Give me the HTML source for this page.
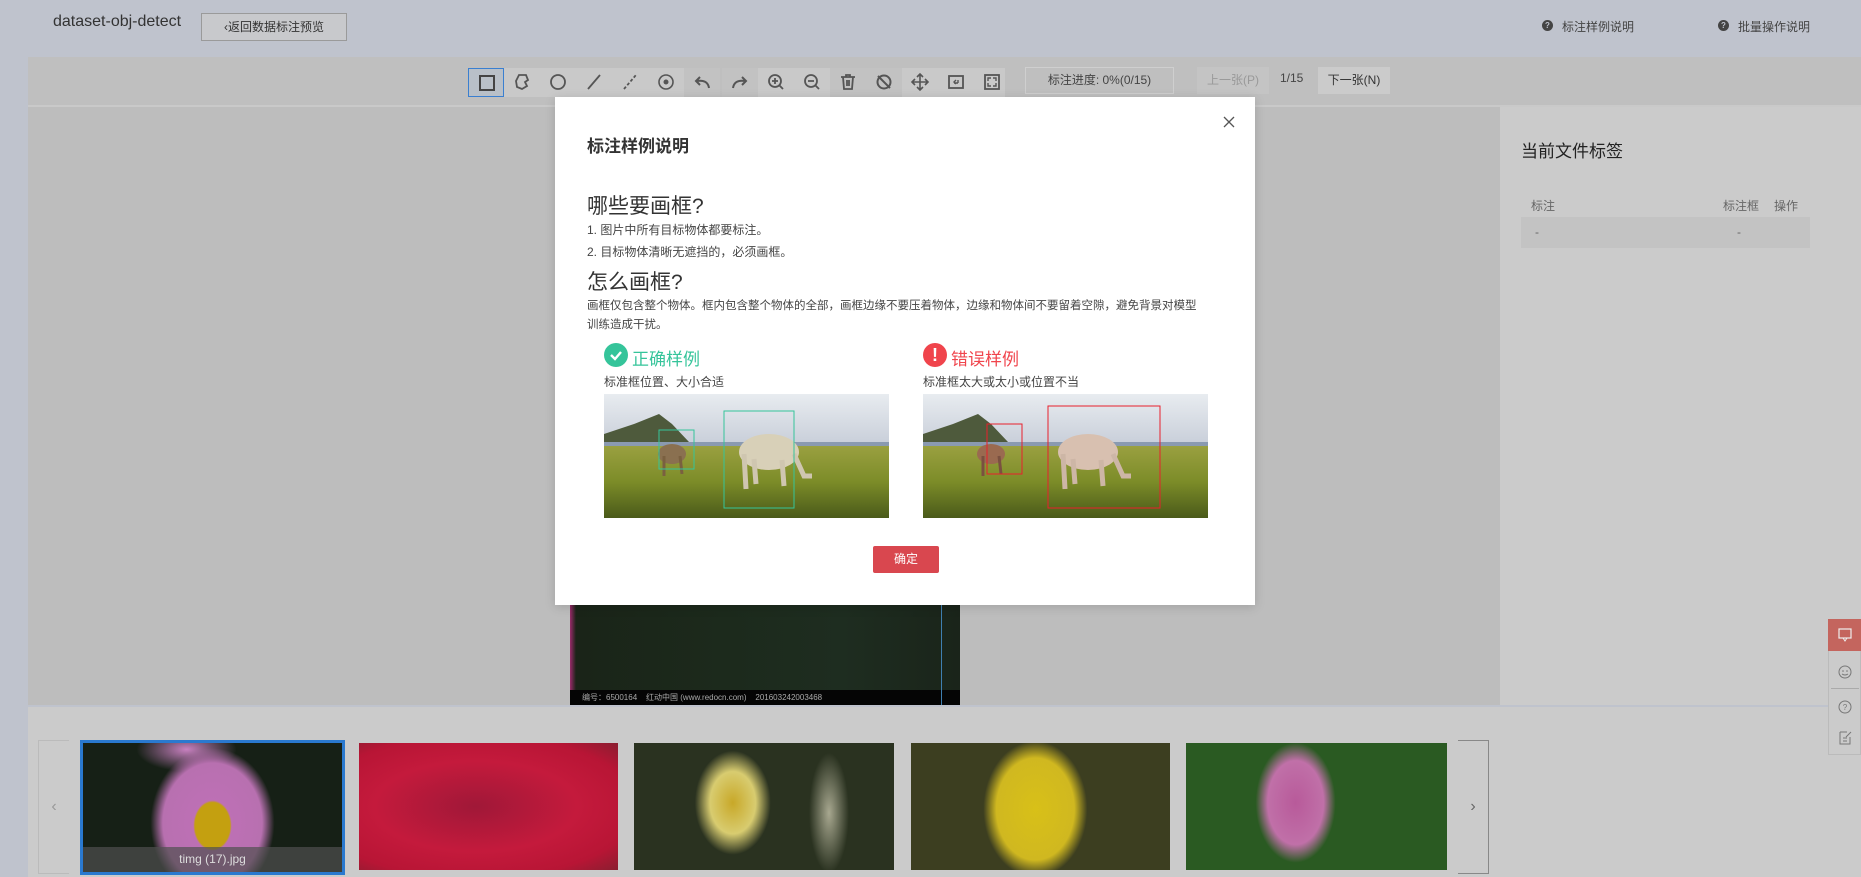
<!DOCTYPE html>
<html><head><meta charset="utf-8">
<style>
*{margin:0;padding:0;box-sizing:border-box}
body{width:1861px;height:877px;overflow:hidden;background:#bfc3cd;font-family:"Liberation Sans","Noto Sans CJK SC",sans-serif;position:relative;color:#333}
.a{position:absolute}
.tb{position:absolute;top:68px;width:36px;height:29px;background:#c9c9c9}
.tb svg{position:absolute;left:8px;top:4px}
</style></head><body>
<div class="a" style="left:53px;top:13px;font-size:16px;color:#333">dataset-obj-detect</div>
<div class="a" style="left:201px;top:13px;width:146px;height:28px;border:1px solid #9a9a9a;background:#c8c9cc;font-size:12px;line-height:26px;text-align:center;color:#333">&lsaquo;返回数据标注预览</div>
<div class="a" style="left:1542px;top:20px;width:11px;height:11px;border-radius:50%;background:#444;color:#bfc3cd;font-size:8px;font-weight:bold;line-height:11px;text-align:center">?</div>
<div class="a" style="left:1562px;top:18px;font-size:12px;color:#444">标注样例说明</div>
<div class="a" style="left:1718px;top:20px;width:11px;height:11px;border-radius:50%;background:#444;color:#bfc3cd;font-size:8px;font-weight:bold;line-height:11px;text-align:center">?</div>
<div class="a" style="left:1738px;top:18px;font-size:12px;color:#444">批量操作说明</div>

<div class="a" style="left:28px;top:57px;width:1833px;height:48px;background:#bfbfbf"></div>
<div class="a" style="left:28px;top:105px;width:1833px;height:2px;background:#c9c9c9"></div>
<div class="tb" style="left:468px;background:#b9c0c8;border:1px solid #3a7fd0"><svg width="20" height="20" viewBox="0 0 20 20"><rect x="3" y="3" width="14" height="14" fill="none" stroke="#444" stroke-width="2"/></svg></div>
<div class="tb" style="left:504px"><svg width="20" height="20" viewBox="0 0 20 20"><path d="M7 3 L14 3 L16 8 L13 10 L15 14 L10 17 L5 15 L4 9 Z" fill="none" stroke="#555" stroke-width="1.8"/></svg></div>
<div class="tb" style="left:540px"><svg width="20" height="20"><circle cx="10" cy="10" r="7" fill="none" stroke="#555" stroke-width="1.8"/></svg></div>
<div class="tb" style="left:576px"><svg width="20" height="20"><line x1="4" y1="17" x2="16" y2="3" stroke="#555" stroke-width="1.8"/></svg></div>
<div class="tb" style="left:612px"><svg width="20" height="20"><line x1="4" y1="17" x2="16" y2="3" stroke="#555" stroke-width="1.8" stroke-dasharray="3 2"/></svg></div>
<div class="tb" style="left:648px"><svg width="20" height="20"><circle cx="10" cy="10" r="7" fill="none" stroke="#555" stroke-width="1.6"/><circle cx="10" cy="10" r="2.5" fill="#555"/></svg></div>
<div class="tb" style="left:684px;background:#c2c2c2"><svg width="20" height="20"><path d="M17 16 C16 10 12 8 5 9 M8 5 L4 9 L8 13" fill="none" stroke="#555" stroke-width="2"/></svg></div>
<div class="tb" style="left:722px;background:#c2c2c2"><svg width="20" height="20"><path d="M3 16 C4 10 8 8 15 9 M12 5 L16 9 L12 13" fill="none" stroke="#555" stroke-width="2"/></svg></div>
<div class="tb" style="left:758px"><svg width="20" height="20"><circle cx="9" cy="9" r="6" fill="none" stroke="#555" stroke-width="1.8"/><path d="M13 13 L17 17 M6 9 H12 M9 6 V12" stroke="#555" stroke-width="1.8"/></svg></div>
<div class="tb" style="left:794px"><svg width="20" height="20"><circle cx="9" cy="9" r="6" fill="none" stroke="#555" stroke-width="1.8"/><path d="M13 13 L17 17 M6 9 H12" stroke="#555" stroke-width="1.8"/></svg></div>
<div class="tb" style="left:830px;background:#c2c2c2"><svg width="20" height="20"><path d="M3 5 H17 M8 5 V3 H12 V5 M5 5 L6 17 H14 L15 5 M9 8 V14 M11 8 V14" fill="none" stroke="#555" stroke-width="1.8"/></svg></div>
<div class="tb" style="left:866px;background:#c2c2c2"><svg width="20" height="20"><circle cx="10" cy="10" r="6.5" fill="none" stroke="#555" stroke-width="2"/><line x1="4" y1="4" x2="16" y2="16" stroke="#555" stroke-width="2"/></svg></div>
<div class="tb" style="left:902px"><svg width="20" height="20"><path d="M10 2 V18 M2 10 H18 M7 5 L10 2 L13 5 M7 15 L10 18 L13 15 M5 7 L2 10 L5 13 M15 7 L18 10 L15 13" fill="none" stroke="#555" stroke-width="1.6"/></svg></div>
<div class="tb" style="left:938px"><svg width="20" height="20"><rect x="3" y="4" width="14" height="12" fill="none" stroke="#555" stroke-width="1.8"/><path d="M12 11 H8 M10 8 L8 10 L10 12 M12 8 V11" fill="none" stroke="#555" stroke-width="1.4"/></svg></div>
<div class="tb" style="left:974px;width:31px"><svg width="20" height="20"><rect x="3" y="3" width="14" height="14" fill="none" stroke="#555" stroke-width="1.8"/><path d="M6 9 V6 H9 M11 6 H14 V9 M14 11 V14 H11 M9 14 H6 V11" fill="none" stroke="#555" stroke-width="1.4"/></svg></div>
<div class="a" style="left:1025px;top:67px;width:149px;height:27px;border:1px solid #cfcfcf;font-size:12px;line-height:25px;text-align:center;color:#444">标注进度: 0%(0/15)</div>
<div class="a" style="left:1197px;top:67px;width:72px;height:27px;background:#c4c4c4;font-size:12px;line-height:27px;text-align:center;color:#999">上一张(P)</div>
<div class="a" style="left:1280px;top:71px;font-size:12px;color:#444">1/15</div>
<div class="a" style="left:1318px;top:67px;width:72px;height:27px;background:#cbcbcb;font-size:12px;line-height:27px;text-align:center;color:#333">下一张(N)</div>

<div class="a" style="left:28px;top:107px;width:1472px;height:598px;background:#bdbdbd"></div>
<div class="a" style="left:1500px;top:107px;width:361px;height:598px;background:#cbcbcb"></div>
<div class="a" style="left:1521px;top:137px;font-size:17px;color:#222">当前文件标签</div>
<div class="a" style="left:1521px;top:194px;width:289px;height:22px;font-size:12px;color:#666"><span class="a" style="left:10px;top:3px">标注</span><span class="a" style="left:202px;top:3px">标注框</span><span class="a" style="left:253px;top:3px">操作</span></div>
<div class="a" style="left:1521px;top:217px;width:289px;height:31px;background:#c3c3c3;font-size:12px;color:#666"><span class="a" style="left:14px;top:8px">-</span><span class="a" style="left:216px;top:8px">-</span></div>
<div class="a" style="left:570px;top:590px;width:390px;height:115px;background:linear-gradient(90deg,#9a2a6a 0,#1a2418 6px,#1c2a1c 40%,#1e2d20 70%,#1a241a)"></div>
<div class="a" style="left:570px;top:690px;width:390px;height:15px;background:#050505;font-size:8px;color:#aaa;line-height:15px;padding-left:12px">编号：6500164 &nbsp;&nbsp; 红动中国 (www.redocn.com) &nbsp;&nbsp; 201603242003468</div>
<div class="a" style="left:941px;top:590px;width:1px;height:115px;background:#3f7fb0"></div>

<div class="a" style="left:28px;top:707px;width:1833px;height:170px;background:#cbcbcb"></div>
<div class="a" style="left:38px;top:740px;width:31px;height:134px;border:1px solid #bbb;border-right:none;font-size:16px;color:#999;line-height:132px;text-align:center">&#8249;</div>
<div class="a" style="left:1458px;top:740px;width:31px;height:134px;border:1px solid #888;border-left:none;font-size:16px;color:#666;line-height:132px;text-align:center">&#8250;</div>
<div class="a" style="left:80px;top:740px;width:265px;height:135px;border:3px solid #2a79cf;background:radial-gradient(ellipse 32px 42px at 50% 64%,#c4a010 0,#c4a010 55%,transparent 60%),radial-gradient(ellipse 62px 75px at 50% 62%,#c070b8 0,#b870b0 80%,transparent 100%),radial-gradient(ellipse 50px 22px at 40% 5%,#c880c0,transparent),#162016;overflow:hidden">
<div class="a" style="left:0;bottom:0;width:100%;height:25px;background:rgba(80,80,80,.7);color:#ddd;font-size:12px;line-height:25px;text-align:center">timg (17).jpg</div></div>
<div class="a" style="left:359px;top:743px;width:259px;height:127px;background:radial-gradient(ellipse at 45% 50%,#a01838,#c41a3c 50%,#b81535 80%,#8a1e30)"></div>
<div class="a" style="left:634px;top:743px;width:260px;height:127px;background:radial-gradient(ellipse 38px 52px at 38% 47%,#c8a828,#d8cc70 60%,transparent 100%),radial-gradient(ellipse 20px 60px at 75% 55%,#a8a890,transparent),#2a3220"></div>
<div class="a" style="left:911px;top:743px;width:259px;height:127px;background:radial-gradient(ellipse 52px 68px at 48% 52%,#d8c018,#d0b820 75%,transparent 100%),#3c3e20"></div>
<div class="a" style="left:1186px;top:743px;width:261px;height:127px;background:radial-gradient(ellipse 40px 60px at 42% 47%,#b85a9a,#c070a8 70%,transparent 100%),#2a5a22"></div>

<div class="a" style="left:1828px;top:619px;width:33px;height:136px;background:#cbcbcb;border:1px solid #bbb"></div>
<div class="a" style="left:1828px;top:619px;width:33px;height:32px;background:#c4655e"><svg width="33" height="32"><rect x="11" y="10" width="12" height="9" fill="none" stroke="#eee" stroke-width="1.2"/><path d="M15 19 L17 22 L19 19" fill="none" stroke="#eee"/></svg></div>
<svg class="a" style="left:1836px;top:663px" width="18" height="18"><circle cx="9" cy="9" r="6" fill="none" stroke="#777"/><circle cx="7" cy="8" r=".8" fill="#777"/><circle cx="11" cy="8" r=".8" fill="#777"/><path d="M6 11 Q9 13 12 11" fill="none" stroke="#777"/></svg>
<div class="a" style="left:1831px;top:688px;width:28px;height:1px;background:#aaa"></div>
<svg class="a" style="left:1836px;top:698px" width="18" height="18"><circle cx="9" cy="9" r="6" fill="none" stroke="#777"/><text x="9" y="12" font-size="8" text-anchor="middle" fill="#777">?</text></svg>
<svg class="a" style="left:1836px;top:729px" width="18" height="18"><path d="M4 3 H11 M4 3 V15 H14 V8 M7 9 H11 M7 12 H11 M10 8 L15 3" fill="none" stroke="#777"/></svg>

<div class="a" style="left:555px;top:97px;width:700px;height:508px;background:#fff;box-shadow:0 2px 10px rgba(0,0,0,.15)">
<div class="a" style="left:32px;top:35px;font-size:17px;font-weight:bold;color:#333">标注样例说明</div>
<svg class="a" style="left:668px;top:19px" width="12" height="12"><path d="M1 1 L11 11 M11 1 L1 11" stroke="#555" stroke-width="1.3"/></svg>
<div class="a" style="left:32px;top:93px;font-size:21px;color:#333">哪些要画框?</div>
<div class="a" style="left:32px;top:124px;font-size:12px;color:#444">1. 图片中所有目标物体都要标注。</div>
<div class="a" style="left:32px;top:146px;font-size:12px;color:#444">2. 目标物体清晰无遮挡的，必须画框。</div>
<div class="a" style="left:32px;top:169px;font-size:21px;color:#333">怎么画框?</div>
<div class="a" style="left:32px;top:200px;width:612px;font-size:11.5px;line-height:19px;color:#444">画框仅包含整个物体。框内包含整个物体的全部，画框边缘不要压着物体，边缘和物体间不要留着空隙，避免背景对模型训练造成干扰。</div>
<div class="a" style="left:49px;top:246px;width:24px;height:24px;border-radius:50%;background:#35c49a"><svg width="24" height="24"><path d="M7 12 L11 16 L17 9" fill="none" stroke="#fff" stroke-width="2.4"/></svg></div>
<div class="a" style="left:77px;top:248px;font-size:17px;color:#35c49a">正确样例</div>
<div class="a" style="left:49px;top:276px;font-size:12px;color:#444">标准框位置、大小合适</div>
<div class="a" style="left:368px;top:246px;width:24px;height:24px;border-radius:50%;background:#f0444c;color:#fff;font-weight:bold;font-size:18px;line-height:24px;text-align:center">!</div>
<div class="a" style="left:396px;top:248px;font-size:17px;color:#f0444c">错误样例</div>
<div class="a" style="left:368px;top:276px;font-size:12px;color:#444">标准框太大或太小或位置不当</div>
<svg class="a" style="left:49px;top:297px" width="285" height="124" viewBox="0 0 285 124">
<defs><linearGradient id="sk" x1="0" y1="0" x2="0" y2="1"><stop offset="0" stop-color="#e8ecf0"/><stop offset="1" stop-color="#9aa3b8"/></linearGradient><linearGradient id="gr" x1="0" y1="0" x2="0" y2="1"><stop offset="0" stop-color="#9aa040"/><stop offset=".5" stop-color="#7c8c28"/><stop offset="1" stop-color="#4a5a1a"/></linearGradient></defs>
<rect width="285" height="124" fill="url(#sk)"/><path d="M0 40 L30 30 L55 20 L68 30 L85 48 L0 52Z" fill="#4e5a3c"/><rect y="48" width="285" height="6" fill="#8a9ab0"/><rect y="52" width="285" height="72" fill="url(#gr)"/>
<ellipse cx="165" cy="58" rx="30" ry="18" fill="#d8d0b8"/><path d="M140 60 L142 95 M150 65 L152 90 M178 66 L180 92 M190 60 L200 82 L208 82" stroke="#cfc6b0" stroke-width="5" fill="none"/>
<ellipse cx="68" cy="60" rx="14" ry="10" fill="#8a7050"/><path d="M60 62 L60 82 M76 62 L78 80" stroke="#7a6040" stroke-width="3"/>
<rect x="55" y="36" width="35" height="39" fill="none" stroke="#35c49a" stroke-width="1"/><rect x="120" y="17" width="70" height="97" fill="none" stroke="#35c49a" stroke-width="1"/>
</svg>
<svg class="a" style="left:368px;top:297px" width="285" height="124" viewBox="0 0 285 124">
<rect width="285" height="124" fill="url(#sk)"/><path d="M0 40 L30 30 L55 20 L68 30 L85 48 L0 52Z" fill="#4e5a3c"/><rect y="48" width="285" height="6" fill="#8a9ab0"/><rect y="52" width="285" height="72" fill="url(#gr)"/>
<ellipse cx="165" cy="58" rx="30" ry="18" fill="#d8c0b0"/><path d="M140 60 L142 95 M150 65 L152 90 M178 66 L180 92 M190 60 L200 82 L208 82" stroke="#cdb6a6" stroke-width="5" fill="none"/>
<ellipse cx="68" cy="60" rx="14" ry="10" fill="#9a6a50"/><path d="M60 62 L60 82 M76 62 L78 80" stroke="#7a5040" stroke-width="3"/>
<rect x="64" y="30" width="35" height="50" fill="none" stroke="#e8202c" stroke-width="1"/><rect x="125" y="12" width="112" height="102" fill="none" stroke="#e8202c" stroke-width="1"/>
</svg>
<div class="a" style="left:318px;top:449px;width:66px;height:27px;background:#d9474f;border-radius:2px;color:#fff;font-size:12px;line-height:27px;text-align:center">确定</div>
</div>
</body></html>
